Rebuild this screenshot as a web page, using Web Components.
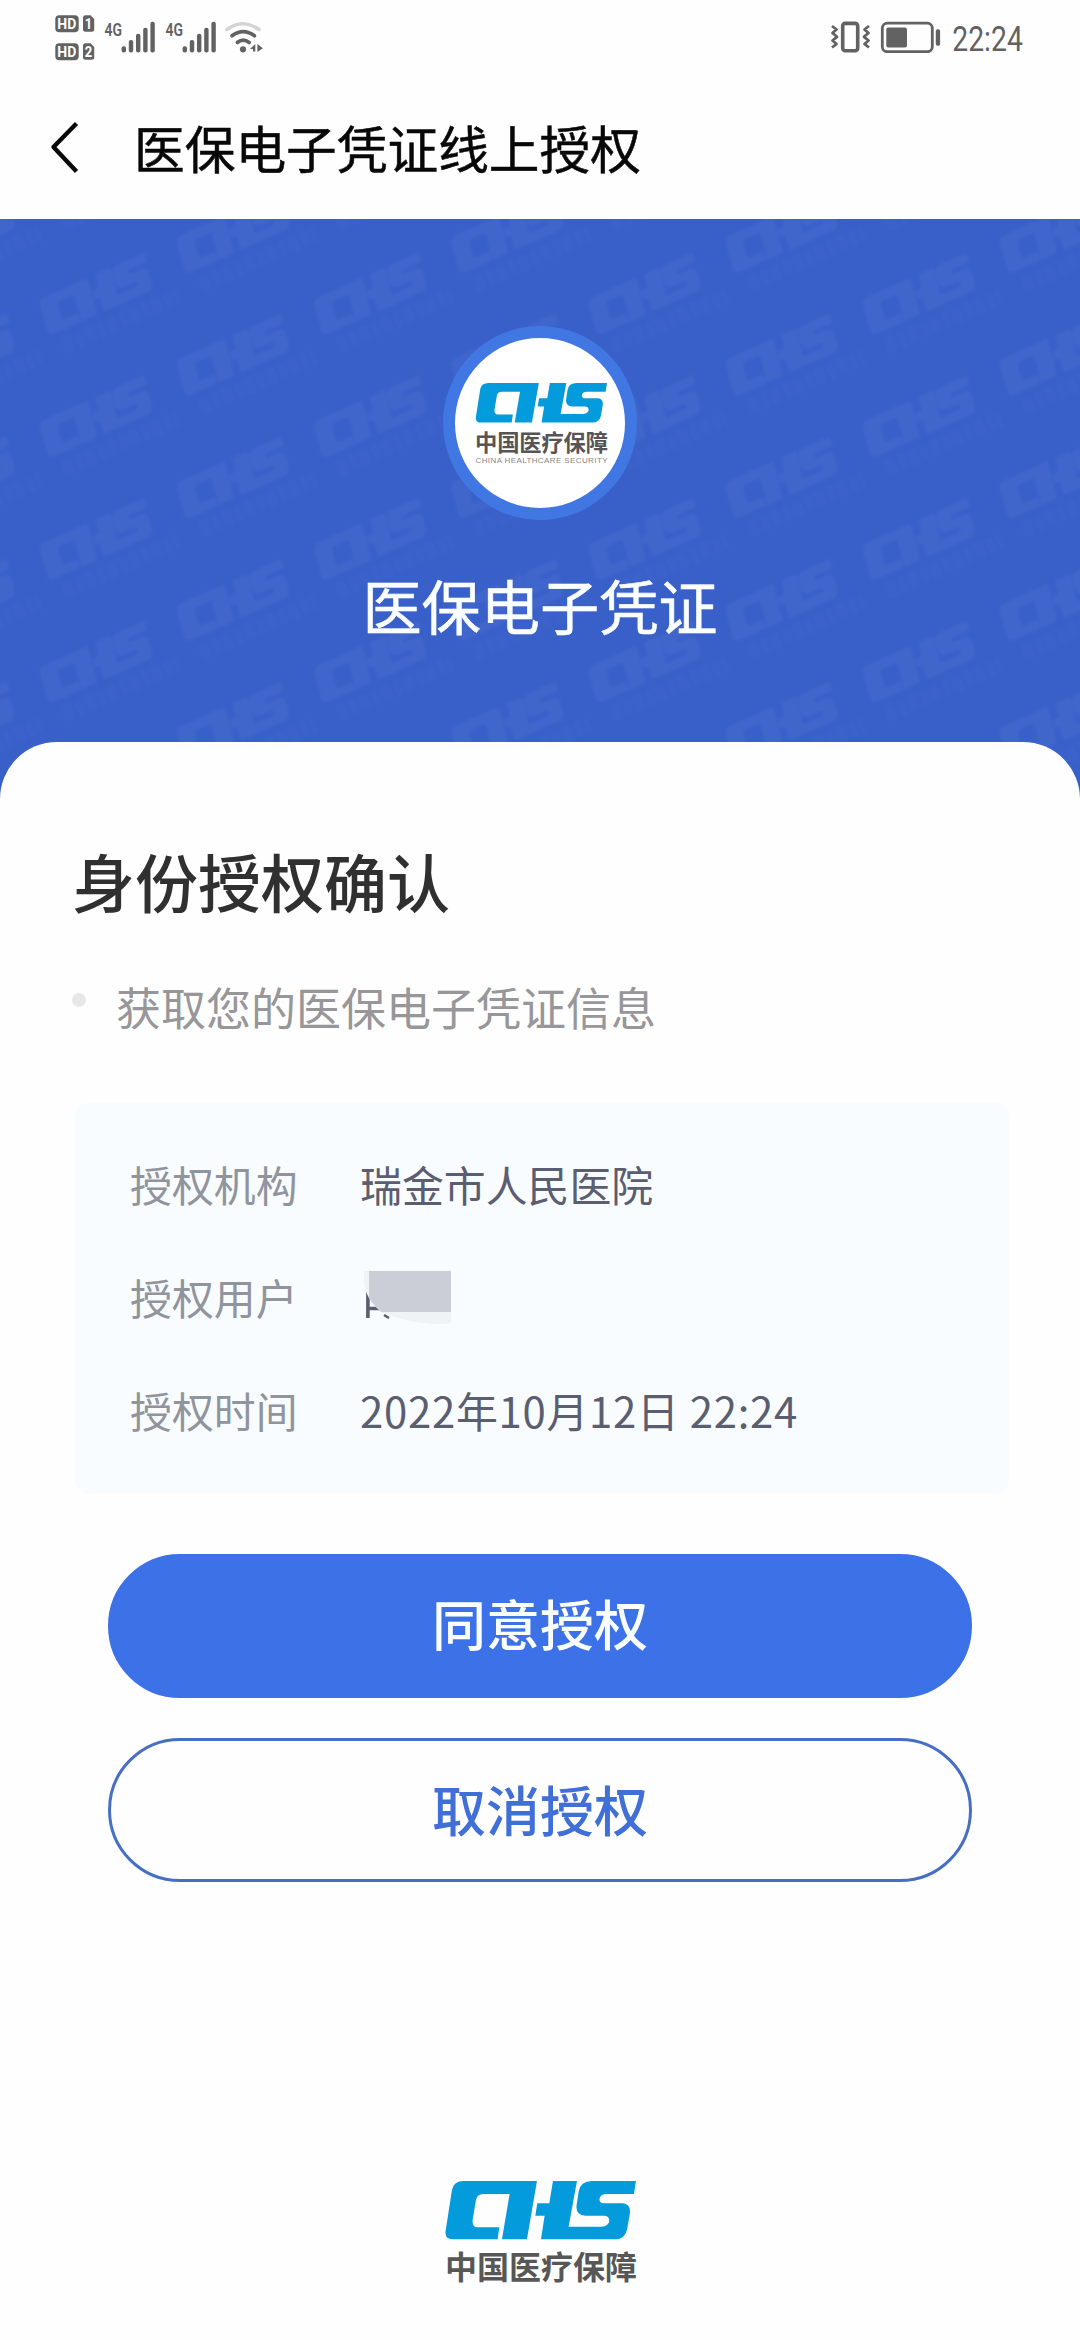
<!DOCTYPE html>
<html lang="zh-CN">
<head>
<meta charset="utf-8">
<title>医保电子凭证线上授权</title>
<style>
  html, body { margin: 0; background: #fefefe; }
  body { width: 1080px; height: 2340px; overflow: hidden; font-family: "Noto Sans CJK SC", "Noto Sans", sans-serif; }
</style>
</head>
<body>
<auth-page></auth-page>
<script>
const define = (name, html) => {
  const tpl = document.createElement('template');
  tpl.innerHTML = html;
  customElements.define(name, class extends HTMLElement {
    constructor() {
      super();
      this.attachShadow({ mode: 'open' }).appendChild(tpl.content.cloneNode(true));
    }
  });
};

/* Brand mark, in a 570 x 176 box */
const MARK = 'M55 0H275L245 175H170L193 39H115Q95 39 92 57L82 117Q80 139 97 139H162L157 175H23Q-3 175 1 149L20 27Q25 0 55 0Z' +
  'M323 0H395L370 137H468Q490 136 492 120Q493 104 475 104H420Q390 102 394 72L400 32Q405 0 440 0H572L566 39H485Q466 39 463 52Q461 67 475 67H533Q559 70 553 102L545 147Q538 175 510 175H287L298 104H270L276 67H312Z';

const bars = x => [46.3, 40, 33.7, 27.7, 21.7]
  .map((y, i) => `<rect x="${x + i * 7.2}" y="${y}" width="4.4" height="${52.4 - y}" rx="2"/>`).join('');

define('status-bar', `
<style>:host{display:flex;justify-content:space-between;height:73px;background:#fefefe}svg{display:block}</style>
<svg width="300" height="73" fill="#626262" font-family="Roboto, sans-serif">
  <rect x="55.3" y="15.3" width="23.4" height="17" rx="4"/>
  <path d="M85.5 15.3H90.5L94.2 19V29.3Q94.2 31.8 91.7 31.8H85.5Q83 31.8 83 29.3V17.8Q83 15.3 85.5 15.3Z"/>
  <rect x="55.3" y="43.3" width="23.4" height="17" rx="4"/>
  <path d="M85.5 43.3H90.5L94.2 47V57.3Q94.2 59.8 91.7 59.8H85.5Q83 59.8 83 57.3V45.8Q83 43.3 85.5 43.3Z"/>
  <g fill="#fff" font-size="15.5" font-weight="700">
    <text x="57.3" y="29.3" textLength="19" lengthAdjust="spacingAndGlyphs">HD</text>
    <text x="57.3" y="57.3" textLength="19" lengthAdjust="spacingAndGlyphs">HD</text>
    <text x="84.8" y="29" font-size="14.5" textLength="7.5" lengthAdjust="spacingAndGlyphs">1</text>
    <text x="84.8" y="57" font-size="14.5" textLength="7.5" lengthAdjust="spacingAndGlyphs">2</text>
  </g>
  <g font-size="19" font-weight="600">
    <text x="104.5" y="35.6" textLength="17.5" lengthAdjust="spacingAndGlyphs">4G</text>
    <text x="165.5" y="35.6" textLength="17.5" lengthAdjust="spacingAndGlyphs">4G</text>
  </g>
  ${bars(121.6)}${bars(182.6)}
  <g fill="none" stroke="#626262" stroke-width="3.6" stroke-linecap="round">
    <path stroke="#d4d4d4" d="M227 29.5Q243 18 259 29.5"/>
    <path d="M232 35.8Q243.3 27.5 254.4 35.8"/>
    <path d="M237.3 42.5Q243.3 37.8 249.2 42.5"/>
  </g>
  <circle cx="243" cy="49.3" r="3.1"/>
  <path d="M255.3 44V51.5H253V49H250L255.3 44ZM257.4 44L262.8 48.3L257.4 52Z"/>
</svg>
<svg width="280" height="73" viewBox="800 0 280 73" fill="#626262" font-family="Roboto, sans-serif">
  <g fill="none" stroke="#626262">
    <rect x="842.7" y="23.4" width="15" height="27.4" rx="2.5" stroke-width="3.6"/>
    <path stroke-width="2.8" stroke-linejoin="round" d="M832 26L836.5 29.5L832.5 33L837 36.8L832.5 40.5L836.5 44L832 47.5M869 26L864.5 29.5L868.5 33L864 36.8L868.5 40.5L864.5 44L869 47.5"/>
    <rect x="882.3" y="23.2" width="50" height="28.5" rx="5" stroke-width="2.8"/>
  </g>
  <rect x="886.3" y="27.5" width="20.7" height="20" rx="2"/>
  <rect x="935.8" y="29.3" width="4.3" height="16.4" rx="1.8"/>
  <text x="952.3" y="51" font-size="35" textLength="70.5" lengthAdjust="spacingAndGlyphs">22:24</text>
</svg>`);

define('nav-bar', `
<style>
:host{display:flex;align-items:center;height:146px;background:#fefefe;color:#080808}
svg{flex:none;margin-left:44px;width:90px}
h1{margin:2px 0 0;font-size:50.7px;line-height:70px;font-weight:400;white-space:nowrap;-webkit-text-stroke:.5px}
</style>
<svg width="90" height="60" viewBox="44 116 90 60"><path d="M76.5 123.5L53.500 147L76.5 171.5" fill="none" stroke="#080808" stroke-width="4.4" stroke-linejoin="round"/></svg>
<h1><slot></slot></h1>`);

/* Two staggered rows of tilted marks per tile */
const stamp = (x, y) => `<g transform="translate(${x} ${y}) rotate(-24) scale(.208 .205)">
  <path d="${MARK}" stroke="#fff" stroke-width="6"/><path d="M40 255H640" stroke="#fff" stroke-width="75" stroke-dasharray="46 22 30 18" opacity=".42"/></g>`;

define('hero-banner', `
<style>
:host{display:grid;height:583px;background:#395fc9;overflow:hidden}
.bg,.body{grid-area:1/1}
.body{display:flex;flex-direction:column;align-items:center;padding-top:107px;color:#fbfeff}
.disc{box-sizing:border-box;width:194px;height:194px;border:12px solid #4177e3;border-radius:50%;background:#fff;display:flex;justify-content:center}
.name{margin-top:49px;font-size:59.2px;line-height:70px;-webkit-text-stroke:.6px}
</style>
<svg class="bg" width="1080" height="583">
  <defs>
    <filter id="soft"><feGaussianBlur stdDeviation="1.8"/></filter>
    <pattern id="marks" width="274.3" height="122.7" patternUnits="userSpaceOnUse" patternTransform="translate(0 28)">
      <g fill="#fff" filter="url(#soft)">
        ${[-122.7, 0, 122.7].map(d => stamp(35, 55 + d) + stamp(172, 116 + d) + stamp(-102.3, 116 + d) + stamp(309.3, 55 + d)).join('')}
      </g>
    </pattern>
  </defs>
  <rect width="1080" height="583" fill="url(#marks)" opacity=".042"/>
</svg>
<div class="body">
  <div class="disc"><slot name="logo"></slot></div>
  <div class="name"><slot></slot></div>
</div>`);

define('badge-logo', `
<style>:host{display:block}svg{display:block}</style>
<svg width="170" height="170" font-family="'Noto Sans CJK SC', sans-serif">
  <path transform="translate(20.7 45) scale(.2295 .226)" fill="#049bdd" d="${MARK}"/>
  <text x="20" y="112.6" font-size="22.3" font-weight="700" fill="#575455" textLength="133">中国医疗保障</text>
  <text x="20.5" y="125" font-size="8" font-family="'Liberation Sans', sans-serif" fill="#858585" textLength="132">CHINA HEALTHCARE SECURITY</text>
</svg>`);

define('footer-logo', `
<style>:host{display:flex;justify-content:center}svg{display:block}</style>
<svg width="200" height="110" font-family="'Noto Sans CJK SC', sans-serif">
  <path transform="translate(5.3 0) scale(.3333)" fill="#049bdd" d="${MARK}"/>
  <text x="5" y="98.1" font-size="32" font-weight="700" fill="#575757">中国医疗保障</text>
</svg>`);

define('scope-item', `
<style>
:host{display:flex;font-size:45px;line-height:60px;color:#979699}
i{flex:none;width:14px;height:14px;border-radius:50%;background:#e7e7e7;margin:16px 30px 0 0}
</style><i></i><span><slot></slot></span>`);

define('info-panel', `
<style>:host{display:block;box-sizing:border-box;height:391px;padding:24px 56px 0 55px;border-radius:14px;background:#f8fcff}</style><slot></slot>`);

define('info-row', `
<style>
:host{display:flex;align-items:center;height:113px;font-size:41.9px;line-height:56px;color:#5b5d70;white-space:nowrap}
.label{width:230px;color:#91949d}
</style><span class="label"><slot name="label"></slot></span><slot></slot>`);

define('masked-name', `
<style>:host{display:block}svg{display:block}</style>
<svg width="100" height="60" viewBox="360 1267 100 60">
  <path fill="none" stroke="#5b5d70" stroke-width="3.6" d="M367.900 1292V1318M367.900 1308.500H380"/>
  <path fill="none" stroke="#5b5d70" stroke-width="2.5" d="M384 1315L389 1318"/>
  <path fill="#eff3f6" d="M364 1271H451V1323Q438 1325.500 419 1322.500Q397 1319 382 1312.500Q364 1298 364 1280Z"/>
  <path fill="#cbced7" d="M369 1271H451V1312H381.500Q373 1305 369 1298Z"/>
</svg>`);

define('pill-button', `
<style>
:host{display:block}
button{display:block;box-sizing:border-box;width:100%;height:144px;padding:0 0 7px;border:3px solid #3c71e7;border-radius:72px;background:#3c71e7;color:#fafeff;font:500 54px/80px "Noto Sans CJK SC",sans-serif}
:host([plain]) button{padding-bottom:3px;background:transparent;border-color:#466fc4;color:#416fd8}
</style><button><slot></slot></button>`);

define('auth-page', `
<style>
:host{display:block;width:1080px;height:2340px}
main{box-sizing:border-box;margin-top:-60px;position:relative;height:1598px;padding:98px 71px 0 75px;border-radius:57px 57px 0 0;background:#fefefe}
h2{margin:0 0 57px -3px;font-size:63px;line-height:80px;font-weight:500;color:#303030}
scope-item{margin-left:-3px}
info-panel{margin-top:66px}
.date{letter-spacing:.72px}
.actions{display:flex;flex-direction:column;gap:40px;margin:60px 37px 0 33px}
footer-logo{margin:299px 4px 0 0}
</style>
<status-bar></status-bar>
<nav-bar>医保电子凭证线上授权</nav-bar>
<hero-banner><badge-logo slot="logo"></badge-logo>医保电子凭证</hero-banner>
<main>
  <h2>身份授权确认</h2>
  <scope-item>获取您的医保电子凭证信息</scope-item>
  <info-panel>
    <info-row><span slot="label">授权机构</span>瑞金市人民医院</info-row>
    <info-row><span slot="label">授权用户</span><masked-name></masked-name></info-row>
    <info-row><span slot="label">授权时间</span><span class="date">2022年10月12日 22:24</span></info-row>
  </info-panel>
  <div class="actions">
    <pill-button>同意授权</pill-button>
    <pill-button plain>取消授权</pill-button>
  </div>
  <footer-logo></footer-logo>
</main>`);
</script>
</body>
</html>
